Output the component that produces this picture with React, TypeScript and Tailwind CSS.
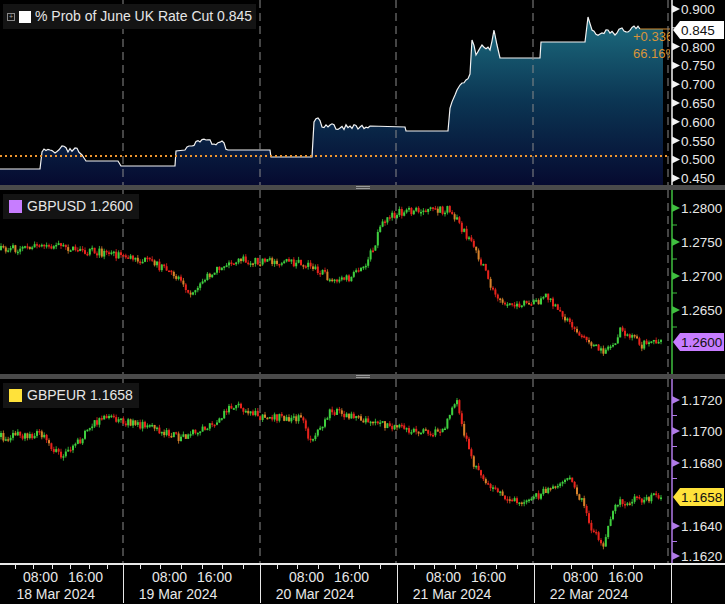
import React from 'react';

const FONT = { fontFamily: '"Liberation Sans Narrow", "Liberation Sans", Arial, sans-serif' };
const PLOT_W = 670;
const DAY_X = [123, 260, 396, 533, 668];

function rng(seed: number) {
  let s = seed;
  return () => {
    s = (s * 16807) % 2147483647;
    return s / 2147483647;
  };
}

function interp(pts: number[][], x: number) {
  for (let i = 1; i < pts.length; i++) {
    if (x <= pts[i][0]) {
      const [x0, y0] = pts[i - 1];
      const [x1, y1] = pts[i];
      return y0 + ((y1 - y0) * (x - x0)) / (x1 - x0 || 1);
    }
  }
  return pts[pts.length - 1][1];
}

function Candles({ pts, seed, top }: { pts: number[][]; seed: number; top: number }) {
  const r = rng(seed);
  const bars: React.ReactElement[] = [];
  let prev = interp(pts, 0) - top;
  for (let x = 0; x < 662; x += 2.4) {
    const y = interp(pts, x) - top + (r() - 0.5) * 8;
    const up = y < prev;
    const color = up ? '#3fcf3f' : r() > 0.7 ? '#d9832b' : '#e8231c';
    const y0 = Math.min(prev, y);
    const h = Math.max(Math.abs(prev - y), 1.5);
    bars.push(<line key={'w' + x} x1={x + 1} x2={x + 1} y1={y0 - r() * 3} y2={y0 + h + r() * 3} stroke={color} strokeWidth={0.8} />);
    bars.push(<rect key={x} x={x} y={y0} width={2} height={h} fill={color} />);
    prev = y;
  }
  return <>{bars}</>;
}

function DayLines({ h }: { h: number }) {
  return (
    <>
      {DAY_X.map((x) => (
        <line key={x} x1={x} x2={x} y1={0} y2={h} stroke="#8a8a8a" strokeWidth={1} strokeDasharray="8 5" />
      ))}
    </>
  );
}

function Axis({ labels, color, h, top, marker }: { labels: [string, number][]; color: string; h: number; top: number; marker?: { text: string; y: number; bg: string } }) {
  const half = (labels[1][1] - labels[0][1]) / 2;
  return (
    <svg width={55} height={h} className="block" style={FONT}>
      <line x1={2} x2={2} y1={0} y2={h} stroke={color} strokeWidth={1.5} />
      {labels.map(([t, y]) => (
        <g key={t}>
          <polygon points={`2,${y - top - 4} 10,${y - top} 2,${y - top + 4}`} fill={color} />
          <line x1={2} x2={7} y1={y - top + half} y2={y - top + half} stroke={color} />
          <text x={11} y={y - top + 5} fill="#e8e8e8" fontSize={13.5}>{t}</text>
        </g>
      ))}
      {marker && (
        <g>
          <polygon points={`3,${marker.y - top} 10,${marker.y - top - 9} 54,${marker.y - top - 9} 54,${marker.y - top + 9} 10,${marker.y - top + 9}`} fill={marker.bg} />
          <text x={11} y={marker.y - top + 5} fill="#111" fontSize={13.5}>{marker.text}</text>
        </g>
      )}
    </svg>
  );
}

function Separator() {
  return (
    <div className="h-[5px] bg-[#4a4a4a] flex items-center justify-center">
      <div className="w-[14px] h-[3px] border-y border-[#9a9a9a]" />
    </div>
  );
}

function Legend({ color, text }: { color: string; text: string }) {
  return (
    <div className="absolute left-[3px] top-[4px] bg-[#141414] px-[6px] py-[2px] flex items-center gap-[5px] text-[14px] text-[#e6e6e6]" style={FONT}>
      <span className="w-[13px] h-[13px]" style={{ background: color }} />
      {text}
    </div>
  );
}

const STEP_BASE: number[][] = [
  [0, 169], [40, 169], [42, 152], [50, 150], [55, 153], [62, 146], [68, 152], [75, 148], [82, 155], [86, 161], [118, 161], [121, 166], [175, 166], [176, 151], [185, 150], [192, 146], [200, 142], [206, 140], [214, 144], [222, 141], [228, 150], [270, 150], [271, 157], [312, 157], [314, 122], [318, 118], [322, 127], [330, 125], [340, 128], [350, 126], [360, 127], [370, 126], [405, 127], [406, 131], [448, 131], [450, 108], [455, 95], [460, 85], [466, 80], [470, 74], [472, 40], [476, 55], [482, 45], [490, 50], [494, 30], [497, 45], [500, 58], [540, 58], [541, 42], [585, 42], [588, 17], [592, 30], [600, 34], [608, 30], [615, 35], [622, 28], [628, 32], [634, 26], [640, 29],
];

// add small wiggle inside the active sessions
const STEP: number[][] = (() => {
  const r = rng(3);
  const out: number[][] = [];
  for (let i = 0; i < STEP_BASE.length; i++) {
    out.push(STEP_BASE[i]);
    const next = STEP_BASE[i + 1];
    if (!next) break;
    const [x0, y0] = STEP_BASE[i];
    const [x1, y1] = next;
    const wiggle = (x0 > 440 && x0 < 500) || (x0 > 585) || (x0 > 312 && x0 < 370) || (x0 > 40 && x0 < 86) || (x0 > 176 && x0 < 228);
    if (wiggle && x1 - x0 > 3) {
      for (let x = x0 + 2; x < x1 - 1; x += 2) {
        out.push([x, y0 + ((y1 - y0) * (x - x0)) / (x1 - x0) + (r() - 0.5) * 5]);
      }
    }
  }
  return out;
})();

function RateChart() {
  const line = STEP.map(([x, y]) => `${x},${y}`).join(' ');
  const area = `0,185 ${line} 663,29 663,185`;
  return (
    <div className="relative flex h-[185px]">
      <svg width={PLOT_W} height={185} className="block" style={FONT}>
        <defs>
          <linearGradient id="g" x1="0" y1="0" x2="0" y2="1">
            <stop offset="0" stopColor="#1d6e80" />
            <stop offset="0.5" stopColor="#0b3553" />
            <stop offset="1" stopColor="#060a30" />
          </linearGradient>
        </defs>
        <polygon points={area} fill="url(#g)" />
        <polyline points={line} fill="none" stroke="#f2f2f2" strokeWidth={1.2} />
        <line x1={640} x2={670} y1={29} y2={29} stroke="#d48a2e" strokeWidth={1} />
        <line x1={0} x2={670} y1={156} y2={156} stroke="#f0962e" strokeWidth={2} strokeDasharray="2 3" />
        <DayLines h={185} />
        <text x={633} y={41} fill="#d8943a" fontSize={13}>+0.336</text>
        <text x={633} y={58} fill="#d8943a" fontSize={13}>66.16%</text>
      </svg>
      <Axis
        h={185}
        top={0}
        color="#f2f2f2"
        labels={['0.900', '0.850', '0.800', '0.750', '0.700', '0.650', '0.600', '0.550', '0.500', '0.450'].map((t, i) => [t, 9 + i * 18.8] as [string, number]).filter((l) => l[0] !== '0.850')}
        marker={{ text: '0.845', y: 30, bg: '#ffffff' }}
      />
      <div className="absolute left-[3px] top-[4px] bg-[#141414] px-[4px] py-[2px] flex items-center gap-[4px] text-[14px] text-[#e6e6e6]" style={FONT}>
        <span className="w-[8px] h-[8px] border border-[#888] text-[7px] leading-[6px] text-center text-[#aaa]">+</span>
        <span className="w-[12px] h-[12px] bg-white" />
        % Prob of June UK Rate Cut 0.845
      </div>
    </div>
  );
}

const USD: number[][] = [
  [0, 250], [50, 245], [80, 250], [120, 255], [150, 262], [175, 275], [190, 292], [215, 268], [240, 260], [280, 262], [310, 265], [330, 280], [350, 278], [365, 265], [375, 240], [380, 222], [400, 212], [440, 210], [450, 210], [465, 235], [480, 262], [492, 292], [505, 302], [530, 305], [545, 296], [560, 315], [580, 335], [600, 352], [612, 345], [620, 330], [640, 345], [662, 340],
];
const EUR: number[][] = [
  [0, 438], [40, 435], [60, 458], [80, 440], [100, 418], [150, 428], [180, 440], [210, 425], [235, 405], [260, 418], [300, 420], [310, 442], [330, 412], [360, 420], [400, 430], [440, 435], [455, 400], [460, 420], [470, 460], [490, 490], [520, 505], [550, 490], [570, 480], [580, 500], [590, 530], [602, 545], [615, 505], [640, 500], [662, 497],
];

function FxChart({ pts, top, seed, axisColor, labels, marker, legend }: { pts: number[][]; top: number; seed: number; axisColor: string; labels: [string, number][]; marker: { text: string; y: number; bg: string }; legend: { color: string; text: string } }) {
  return (
    <div className="relative flex h-[184px]">
      <svg width={PLOT_W} height={184} className="block">
        <DayLines h={184} />
        <Candles pts={pts} seed={seed} top={top} />
      </svg>
      <Axis h={184} top={top} color={axisColor} labels={labels} marker={marker} />
      <Legend {...legend} />
    </div>
  );
}

function TimeAxis() {
  const days = ['18 Mar 2024', '19 Mar 2024', '20 Mar 2024', '21 Mar 2024', '22 Mar 2024'];
  return (
    <div className="flex h-[40px] border-t-2 border-[#e8e8e8] text-[14px] text-[#e8e8e8]" style={FONT}>
      {days.map((d, i) => (
        <div key={d} className={`relative flex flex-col ${i === 0 ? 'w-[123px] items-end pr-[20px]' : 'w-[137px] border-l border-[#e8e8e8] items-center'}`}>
          <div className="flex gap-[10px] leading-[16px] mt-[4px]">
            <span>08:00</span>
            <span>16:00</span>
          </div>
          <div className={`leading-[18px] ${i === 0 ? 'pr-[8px]' : 'pr-[28px]'}`}>{d}</div>
          <div className="absolute top-0 left-0 right-0 flex justify-around px-[6px]">
            {[0, 1, 2, 3, 4, 5].map((k) => (
              <span key={k} className="w-px h-[4px] bg-[#e8e8e8]" />
            ))}
          </div>
        </div>
      ))}
      <div className="border-l border-[#e8e8e8] flex-1" />
    </div>
  );
}

export default function App() {
  return (
    <div className="w-[725px] h-[604px] bg-black overflow-hidden flex flex-col">
      <RateChart />
      <Separator />
      <FxChart
        pts={USD}
        top={190}
        seed={7}
        axisColor="#3fbf3f"
        labels={['1.2800', '1.2750', '1.2700', '1.2650'].map((t, i) => [t, 208 + i * 34] as [string, number])}
        marker={{ text: '1.2600', y: 342, bg: '#c77dff' }}
        legend={{ color: '#c77dff', text: 'GBPUSD  1.2600' }}
      />
      <Separator />
      <FxChart
        pts={EUR}
        top={380}
        seed={13}
        axisColor="#b07ae8"
        labels={([['1.1720', 401], ['1.1700', 432], ['1.1680', 464], ['1.1640', 527], ['1.1620', 557]] as [string, number][])}
        marker={{ text: '1.1658', y: 498, bg: '#ffe23a' }}
        legend={{ color: '#ffe23a', text: 'GBPEUR  1.1658' }}
      />
      <TimeAxis />
    </div>
  );
}
